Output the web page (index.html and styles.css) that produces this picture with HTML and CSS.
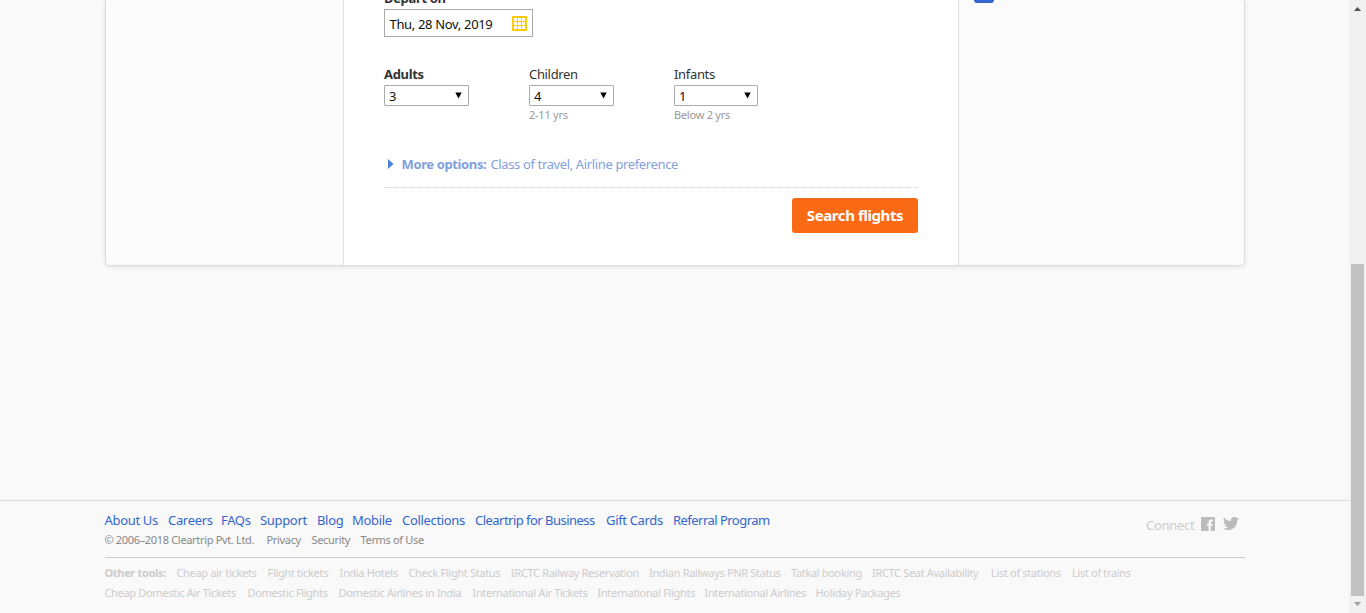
FILE: index.html
```html
<!DOCTYPE html>
<html lang="en">
<head>
<meta charset="utf-8">
<title>Cleartrip</title>
<link rel="stylesheet" href="styles.css">
</head>
<body>
<div class="page">
  <main class="card">
    <aside class="side-left"></aside>
    <form class="search">
      <label class="label strong depart-label">Depart on</label>
      <div class="date">
        <span class="date-text">Thu, 28 Nov, 2019</span>
        <svg class="calendar" width="15" height="15" viewBox="0 0 15 15"><path fill="#fc1" d="M0 0h15v15H0z"/><path fill="#fff" d="M2 2h3v3H2zM6 2h3v3H6zM10 2h3v3h-3zM2 6h3v3H2zM6 6h3v3H6zM10 6h3v3h-3zM2 10h3v3H2zM6 10h3v3H6zM10 10h3v3h-3z"/></svg>
      </div>
      <div class="passengers">
        <div class="field">
          <label class="label strong adults">Adults</label>
          <div class="select"><span>3</span><svg width="7" height="7" viewBox="0 0 7 7"><path d="M.3.500h6.400L3.500 6.500z"/></svg></div>
        </div>
        <div class="field">
          <label class="label">Children</label>
          <div class="select"><span>4</span><svg width="7" height="7" viewBox="0 0 7 7"><path d="M.3.500h6.400L3.500 6.500z"/></svg></div>
          <small class="hint">2-11 yrs</small>
        </div>
        <div class="field">
          <label class="label">Infants</label>
          <div class="select narrow"><span>1</span><svg width="7" height="7" viewBox="0 0 7 7"><path d="M.3.500h6.400L3.500 6.500z"/></svg></div>
          <small class="hint">Below 2 yrs</small>
        </div>
      </div>
      <div class="more">
        <svg width="6" height="10" viewBox="0 0 6 10"><path fill="#4d82d9" d="M0 0l5.500 5L0 10z"/></svg>
        <b>More options:</b><span>Class of travel, Airline preference</span>
      </div>
      <div class="actions"><button class="submit" type="button">Search flights</button></div>
    </form>
    <aside class="side-right"><div class="tab"></div></aside>
  </main>
  <footer class="footer">
    <div class="footer-inner">
      <div class="footer-top">
        <div class="company">
          <nav class="links main-links"><a>About Us</a><a>Careers</a><a>FAQs</a><a>Support</a><a>Blog</a><a>Mobile</a><a>Collections</a><a class="tight">Cleartrip for Business</a><a>Gift Cards</a><a class="tight">Referral Program</a></nav>
          <div class="links legal"><span>© 2006–2018 Cleartrip Pvt. Ltd.</span><a>Privacy</a><a>Security</a><a>Terms of Use</a></div>
        </div>
        <div class="connect">
          <span>Connect</span>
          <svg class="facebook" width="14" height="14" viewBox="0 0 14 14"><path fill="#bbb" d="M1 0h12a1 1 0 0 1 1 1v12a1 1 0 0 1-1 1h-3.200V8.700h1.800l.3-2H9.800V5.400c0-.7.3-1 1-1H12V2.500h-1.700C8.400 2.500 7.600 3.600 7.600 5.200v1.500H5.800v2h1.800V14H1a1 1 0 0 1-1-1V1a1 1 0 0 1 1-1z"/></svg>
          <svg class="twitter" width="16" height="13" viewBox="0 0 24 19.500"><path fill="#bbb" d="M24 2.300c-.9.400-1.800.7-2.800.8a5 5 0 0 0 2.200-2.700c-1 .6-2 1-3.100 1.200a4.900 4.900 0 0 0-8.400 4.500A14 14 0 0 1 1.700.9a4.900 4.900 0 0 0 1.500 6.600c-.8 0-1.600-.2-2.200-.6v.1a4.900 4.900 0 0 0 3.900 4.800c-.7.200-1.500.2-2.200.1a4.900 4.900 0 0 0 4.600 3.400A9.900 9.900 0 0 1 0 17.300a14 14 0 0 0 21.500-12.500c1-.7 1.800-1.500 2.500-2.500z"/></svg>
        </div>
      </div>
      <div class="tools">
        <div class="links tools-a"><b>Other tools:</b><a>Cheap air tickets</a><a>Flight tickets</a><a>India Hotels</a><a>Check Flight Status</a><a>IRCTC Railway Reservation</a><a>Indian Railways PNR Status</a><a>Tatkal booking</a><a>IRCTC Seat Availability</a><a>List of stations</a><a>List of trains</a></div>
        <div class="links tools-b"><a>Cheap Domestic Air Tickets</a><a>Domestic Flights</a><a>Domestic Airlines in India</a><a>International Air Tickets</a><a>International Flights</a><a>International Airlines</a><a>Holiday Packages</a></div>
      </div>
    </div>
  </footer>
</div>
<div class="scrollbar">
  <svg width="17" height="17" viewBox="0 0 17 17"><path fill="#505050" d="M5 11l3.500-4 3.500 4z"/></svg>
  <div class="thumb"></div>
  <svg width="17" height="17" viewBox="0 0 17 17"><path fill="#a3a3a3" d="M5 6h7L8.500 10z"/></svg>
</div>
</body>
</html>
```
FILE: styles.css
```css
* { box-sizing: border-box; }
body {
  margin: 0;
  height: 613px;
  overflow: hidden;
  display: flex;
  background: #f9f9f9;
  color: #333;
  font: 13px/18px "Noto Sans", "Open Sans", sans-serif;
  letter-spacing: -0.33px;
  white-space: nowrap;
}
.page { width: 1349px; display: flex; flex-direction: column; }
.card {
  width: 1140px;
  height: 266px;
  margin-left: 105px;
  display: grid;
  grid-template-columns: 237px 616px 1fr;
  background: #fbfbfb;
  border: 1px solid #dcdcdc;
  border-top: 0;
  border-radius: 0 0 5px 5px;
  box-shadow: 0 1px 4px rgba(0, 0, 0, .1);
}
.search {
  padding: 0 40px;
  background: #fff;
  border: solid #dcdcdc;
  border-width: 0 1px;
  height: 265px;
}
.label { display: block; }
.strong { font-weight: 700; }
.depart-label { margin-top: -11px; height: 20px; }
.date {
  width: 149px;
  height: 28px;
  padding: 0 5px 0 4.500px;
  border: 1px solid #aaa;
  display: flex;
  align-items: center;
  justify-content: space-between;
  color: #111;
}
.date-text { padding-top: 2px; }
.passengers { display: flex; margin-top: 28px; height: 75px; }
.field { width: 145px; }
.field .label { height: 20px; }
.select {
  width: 85px;
  height: 21px;
  padding: 0 6px 0 4px;
  border: 1px solid #aaa;
  border-radius: 1px;
  display: flex;
  align-items: center;
  justify-content: space-between;
  color: #111;
}
.select span { padding-top: 1px; }
.narrow { width: 84px; }
.hint { display: block; color: #999; font-size: 11px; line-height: 18px; letter-spacing: -0.25px; }
.more {
  height: 48px;
  padding: 15px 0 0 4px;
  border-bottom: 1px dotted #d4d4d4;
  display: grid;
  grid-template-columns: 13.500px 89px 1fr;
  color: #829fdd;
  letter-spacing: -0.370px;
}
.more svg { margin-top: 4px; }
.actions { display: flex; justify-content: flex-end; padding-top: 10px; }
.submit {
  width: 126px;
  height: 35px;
  padding: 0;
  border: 0;
  border-radius: 3px;
  background: #fa6913;
  color: #fff;
  font: 700 15px/35px "Noto Sans", "Open Sans", sans-serif;
  letter-spacing: -0.4px;
}
.tab { width: 20px; height: 3px; margin-left: 15px; background: #36c; border-radius: 0 0 3px 3px; }
.footer { margin-top: 234px; border-top: 1px solid #ddd; }
.footer-inner { width: 1140px; margin-left: 105px; }
.footer-top { height: 57px; padding-top: 10px; border-bottom: 1px solid #ccc; display: flex; justify-content: space-between; }
.links { display: grid; margin-left: -0.5px; }
.main-links { color: #36c; grid-template-columns: 63.500px 53px 39px 57px 35px 50px 73px 131px 67px 100px; }
.tight { letter-spacing: -0.53px; }
.legal { color: #888; font-size: 11px; line-height: 20px; padding-top: 1px; grid-template-columns: 162px 45px 49px 70px; }
.connect { display: flex; color: #ccc; padding-right: 6px; }
.connect span { width: 55px; padding-top: 5px; letter-spacing: -0.3px; }
.facebook { margin: 6px 8px 0 0; }
.twitter { margin: 6px 0 0; }
.tools { padding-top: 5px; color: #ccc; font-size: 11px; line-height: 20px; }
.tools-a { grid-template-columns: 72px 91px 72px 69px 102.500px 138px 142px 81px 119px 81px 60px; }
.tools-b { grid-template-columns: 143px 91px 134px 125px 107px 111px 85px; }
.scrollbar { width: 17px; height: 613px; background: #f1f1f1; display: flex; flex-direction: column; justify-content: space-between; }
.thumb { width: 13px; height: 332px; margin: 247px 0 0 2px; background: #c1c1c1; }
```
